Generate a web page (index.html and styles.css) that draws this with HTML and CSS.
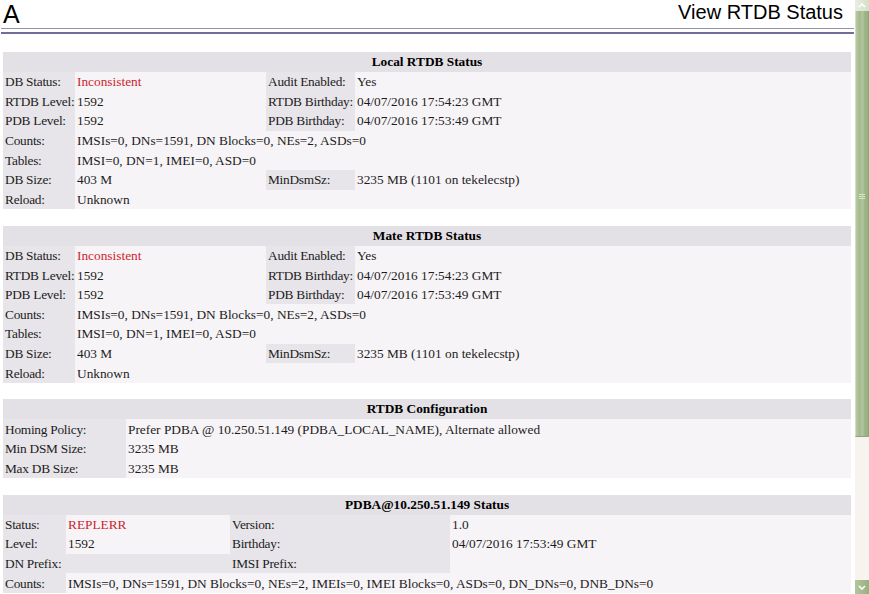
FILE: index.html
```html
<!DOCTYPE html>
<html>
<head>
<meta charset="utf-8">
<title>View RTDB Status</title>
<link rel="stylesheet" href="styles.css">
</head>
<body>
<div class="window">
  <main class="page">
    <header class="top">
      <span class="logo">A</span>
      <h1 class="title">View RTDB Status</h1>
    </header>
    <div class="rule"></div>

    <table class="tbl first">
      <colgroup><col class="c72"><col class="c191"><col class="c89"><col></colgroup>
      <tr><th colspan="4">Local RTDB Status</th></tr>
      <tr><td class="lbl">DB Status:</td><td class="val red">Inconsistent</td><td class="lbl">Audit Enabled:</td><td class="val">Yes</td></tr>
      <tr><td class="lbl">RTDB Level:</td><td class="val">1592</td><td class="lbl">RTDB Birthday:</td><td class="val">04/07/2016 17:54:23 GMT</td></tr>
      <tr><td class="lbl">PDB Level:</td><td class="val">1592</td><td class="lbl">PDB Birthday:</td><td class="val">04/07/2016 17:53:49 GMT</td></tr>
      <tr><td class="lbl">Counts:</td><td class="val" colspan="3">IMSIs=0, DNs=1591, DN Blocks=0, NEs=2, ASDs=0</td></tr>
      <tr><td class="lbl">Tables:</td><td class="val" colspan="3">IMSI=0, DN=1, IMEI=0, ASD=0</td></tr>
      <tr><td class="lbl">DB Size:</td><td class="val">403 M</td><td class="lbl">MinDsmSz:</td><td class="val">3235 MB (1101 on tekelecstp)</td></tr>
      <tr><td class="lbl">Reload:</td><td class="val" colspan="3">Unknown</td></tr>
    </table>

    <table class="tbl">
      <colgroup><col class="c72"><col class="c191"><col class="c89"><col></colgroup>
      <tr><th colspan="4">Mate RTDB Status</th></tr>
      <tr><td class="lbl">DB Status:</td><td class="val red">Inconsistent</td><td class="lbl">Audit Enabled:</td><td class="val">Yes</td></tr>
      <tr><td class="lbl">RTDB Level:</td><td class="val">1592</td><td class="lbl">RTDB Birthday:</td><td class="val">04/07/2016 17:54:23 GMT</td></tr>
      <tr><td class="lbl">PDB Level:</td><td class="val">1592</td><td class="lbl">PDB Birthday:</td><td class="val">04/07/2016 17:53:49 GMT</td></tr>
      <tr><td class="lbl">Counts:</td><td class="val" colspan="3">IMSIs=0, DNs=1591, DN Blocks=0, NEs=2, ASDs=0</td></tr>
      <tr><td class="lbl">Tables:</td><td class="val" colspan="3">IMSI=0, DN=1, IMEI=0, ASD=0</td></tr>
      <tr><td class="lbl">DB Size:</td><td class="val">403 M</td><td class="lbl">MinDsmSz:</td><td class="val">3235 MB (1101 on tekelecstp)</td></tr>
      <tr><td class="lbl">Reload:</td><td class="val" colspan="3">Unknown</td></tr>
    </table>

    <table class="tbl">
      <colgroup><col class="c123"><col></colgroup>
      <tr><th colspan="2">RTDB Configuration</th></tr>
      <tr><td class="lbl">Homing Policy:</td><td class="val">Prefer PDBA @ 10.250.51.149 (PDBA_LOCAL_NAME), Alternate allowed</td></tr>
      <tr><td class="lbl">Min DSM Size:</td><td class="val">3235 MB</td></tr>
      <tr><td class="lbl">Max DB Size:</td><td class="val">3235 MB</td></tr>
    </table>

    <table class="tbl">
      <colgroup><col class="c63"><col class="c164"><col class="c220"><col></colgroup>
      <tr><th colspan="4">PDBA@10.250.51.149 Status</th></tr>
      <tr><td class="lbl">Status:</td><td class="val red">REPLERR</td><td class="lbl">Version:</td><td class="val">1.0</td></tr>
      <tr><td class="lbl">Level:</td><td class="val">1592</td><td class="lbl">Birthday:</td><td class="val">04/07/2016 17:53:49 GMT</td></tr>
      <tr><td class="lbl">DN Prefix:</td><td class="lbl"></td><td class="lbl">IMSI Prefix:</td><td class="val"></td></tr>
      <tr><td class="lbl">Counts:</td><td class="val" colspan="3">IMSIs=0, DNs=1591, DN Blocks=0, NEs=2, IMEIs=0, IMEI Blocks=0, ASDs=0, DN_DNs=0, DNB_DNs=0</td></tr>
    </table>
  </main>

  <div class="sb">
    <div class="sb-up">
      <svg width="8" height="5" viewBox="0 0 8 5"><path d="M1 4 L4 1 L7 4" fill="none" stroke="#ffffff" stroke-width="1.6"/></svg>
    </div>
    <div class="sb-thumb">
      <span class="grip"></span>
      <span class="grip"></span>
      <span class="grip"></span>
    </div>
    <div class="sb-track"></div>
    <div class="sb-down">
      <svg width="8" height="5" viewBox="0 0 8 5"><path d="M1 1 L4 4 L7 1" fill="none" stroke="#ffffff" stroke-width="1.6"/></svg>
    </div>
  </div>
</div>
</body>
</html>
```

FILE: styles.css
```css
html, body {
  margin: 0;
  padding: 0;
  height: 100%;
  overflow: hidden;
  background: #ffffff;
}

.window {
  display: flex;
  height: 594px;
}

.page {
  flex: 1;
  min-width: 0;
  overflow: hidden;
  padding: 0 1px;
}

.top {
  display: flex;
  justify-content: space-between;
  align-items: flex-start;
  height: 28px;
  padding: 0 11px 0 2px;
  color: #000;
}

.logo {
  font: 25px/28px "Liberation Sans", Arial, sans-serif;
}

.title {
  margin: 0;
  font: normal 20px/24px "Liberation Sans", Arial, sans-serif;
}

.rule {
  height: 3px;
  border-top: 1px solid #9090b2;
  border-bottom: 2px solid #6e6e98;
}

.tbl {
  width: 848px;
  margin: 16.5px 3px 0 2px;
  border-collapse: collapse;
  border-spacing: 0;
  table-layout: fixed;
  font: 13.33px "Liberation Serif", "Times New Roman", serif;
  color: #1c1c1c;
}

.tbl.first {
  margin-top: 18px;
}

.c72 { width: 72px; }
.c191 { width: 191px; }
.c89 { width: 89px; }
.c123 { width: 123px; }
.c63 { width: 63px; }
.c164 { width: 164px; }
.c220 { width: 220px; }

.tbl th {
  height: 20px;
  padding: 0;
  background: #e3e1e5;
  font-weight: bold;
  text-align: center;
  color: #000;
}

.tbl td {
  height: 19.6px;
  padding: 0 1px 0 2px;
  line-height: 15px;
  white-space: nowrap;
  text-align: left;
  vertical-align: middle;
}

.lbl {
  background: #e7e5e9;
  letter-spacing: -0.25px;
}

.val {
  background: #f7f4f7;
}

.red {
  color: #cc1f2e;
}

/* fake window scrollbar */
.sb {
  width: 14px;
  flex: none;
  display: flex;
  flex-direction: column;
  background: #f7f4ef;
}

.sb-up {
  height: 11px;
  display: flex;
  align-items: center;
  justify-content: center;
  background: linear-gradient(to right, #e9eee2, #d4dfc8);
}

.sb-thumb {
  height: 426px;
  box-sizing: border-box;
  display: flex;
  flex-direction: column;
  align-items: center;
  justify-content: center;
  gap: 1px;
  padding-bottom: 54px;
  border-left: 1px solid #d2ddc4;
  border-right: 1px solid #8ea577;
  border-bottom: 1px solid #8ea577;
  background: linear-gradient(to right, #b6c9a2 0, #a4bb8d 30%, #b3c69f 55%, #9fb689 70%, #98af82 100%);
}

.grip {
  display: block;
  width: 6px;
  height: 1px;
  background: #d8e3cc;
}

.sb-track {
  flex: 1;
}

.sb-down {
  height: 14px;
  display: flex;
  align-items: center;
  justify-content: center;
  background: linear-gradient(to right, #b2c69c, #98b081);
}
```
